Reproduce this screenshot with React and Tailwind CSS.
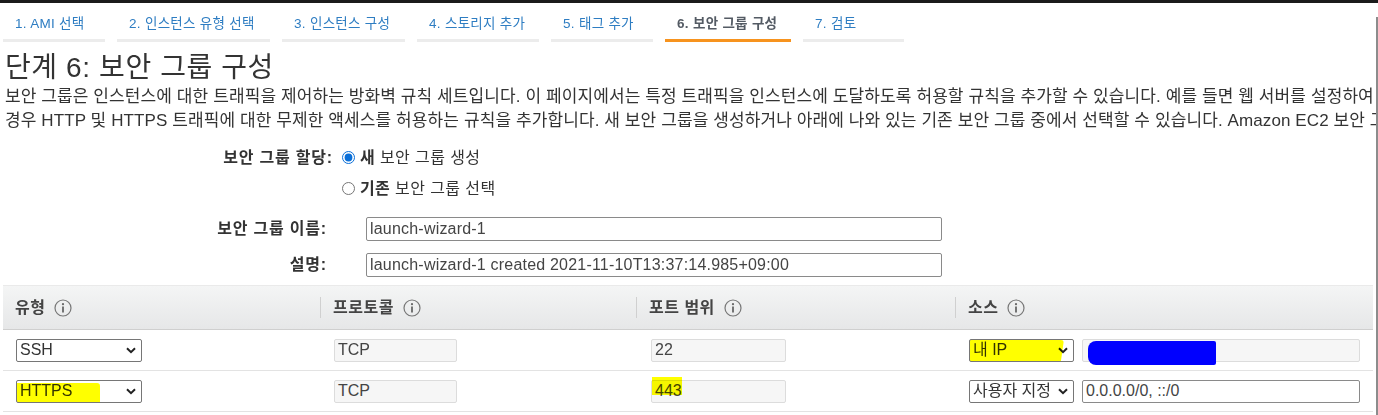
import { useState } from "react";

const tabs = [
  { label: "1. AMI 선택", w: "w-[102px]" },
  { label: "2. 인스턴스 유형 선택", w: "w-[153px]" },
  { label: "3. 인스턴스 구성", w: "w-[123px]" },
  { label: "4. 스토리지 추가", w: "w-[122px]" },
  { label: "5. 태그 추가", w: "w-[102px]" },
  { label: "6. 보안 그룹 구성", w: "w-[126px]", active: true },
  { label: "7. 검토", w: "w-[101px]" },
];

const InfoIcon = () => (
  <svg width="18" height="18" viewBox="0 0 18 18" className="ml-[9px]">
    <circle cx="9" cy="9" r="8" fill="none" stroke="#777" strokeWidth="1.2" />
    <circle cx="9" cy="5.2" r="1.1" fill="#666" />
    <rect x="8.1" y="7.5" width="1.8" height="6" fill="#666" />
  </svg>
);

const Chevron = () => (
  <svg width="10" height="7" viewBox="0 0 10 7" className="shrink-0">
    <path d="M1 1.2 L5 5.2 L9 1.2" fill="none" stroke="#222" strokeWidth="2" />
  </svg>
);

// fake select box, native one renders differently
const SelectBox = ({ value, w, children }) => (
  <div className={`relative flex items-center h-[23px] ${w} border border-[#767676] rounded-[2px] bg-white pl-[3px] pr-[5px] text-[16px] text-[#333] overflow-hidden`}>
    <span className="flex-1 whitespace-nowrap overflow-hidden">{value}</span>
    <Chevron />
    {children}
  </div>
);

const TextBox = ({ value, w, disabled, children }) => (
  <div className={`relative flex items-center h-[23px] ${w} border rounded-[2px] px-[3px] text-[16px] text-[#444] whitespace-nowrap ${disabled ? "bg-[#f6f6f6] border-[#dcdcdc]" : "bg-white border-[#8a8a8a]"}`}>
    {value}
    {children}
  </div>
);

export default function App() {
  const [assign, setAssign] = useState("new");

  return (
    <div className="w-[1378px] h-[415px] overflow-hidden bg-white flex flex-col font-['Liberation_Sans','Noto_Sans_CJK_KR',sans-serif]">
      <div className="h-[3px] bg-[#1b1b1b] shrink-0" />
      <div className="flex flex-1 min-h-0">
        <div className="w-[1376px] flex flex-col">
          {/* wizard tabs */}
          <div className="flex gap-[12px] pl-[3px] pt-[9px]">
            {tabs.map((t) => (
              <div key={t.label} className={`${t.w} h-[30px] flex flex-col`}>
                <div className={`flex-1 pl-[12px] pt-[2px] text-[13.5px] tracking-[0.3px] whitespace-nowrap ${t.active ? "text-[#545b64] font-bold" : "text-[#2e7dc2]"}`}>
                  {t.label}
                </div>
                <div className={`h-[3px] ${t.active ? "bg-[#f7931e]" : "bg-[#ececec]"}`} />
              </div>
            ))}
          </div>

          {/* title + description */}
          <h1 className="pl-[5px] mt-[9px] text-[28px] tracking-[0.6px] leading-[34px] text-[#333]">단계 6: 보안 그룹 구성</h1>
          <div className="pl-[5px] text-[17px] tracking-[0.1px] leading-[24px] text-[#333] whitespace-nowrap overflow-hidden">
            <div>보안 그룹은 인스턴스에 대한 트래픽을 제어하는 방화벽 규칙 세트입니다. 이 페이지에서는 특정 트래픽을 인스턴스에 도달하도록 허용할 규칙을 추가할 수 있습니다. 예를 들면 웹 서버를 설정하여</div>
            <div>경우 HTTP 및 HTTPS 트래픽에 대한 무제한 액세스를 허용하는 규칙을 추가합니다. 새 보안 그룹을 생성하거나 아래에 나와 있는 기존 보안 그룹 중에서 선택할 수 있습니다. Amazon EC2 보안 그룹</div>
          </div>

          {/* form */}
          <div className="flex flex-col mt-[9px] text-[16px] text-[#333]">
            <div className="flex items-center h-[31px]">
              <div className="w-[333px] text-right font-bold tracking-[0.8px]">보안 그룹 할당:</div>
              <label className="flex items-center ml-[9px] gap-[5px]">
                <input type="radio" name="sg" checked={assign === "new"} onChange={() => setAssign("new")} className="w-[13px] h-[13px] m-0 accent-[#0b6fd8]" />
                <span className="tracking-[0.4px]"><b>새</b> 보안 그룹 생성</span>
              </label>
            </div>
            <div className="flex items-center h-[31px]">
              <div className="w-[333px]" />
              <label className="flex items-center ml-[9px] gap-[5px]">
                <input type="radio" name="sg" checked={assign === "old"} onChange={() => setAssign("old")} className="w-[13px] h-[13px] m-0 accent-[#0b6fd8]" />
                <span className="tracking-[0.4px]"><b>기존</b> 보안 그룹 선택</span>
              </label>
            </div>
            <div className="flex items-center h-[36px] mt-[7px]">
              <div className="w-[327px] text-right font-bold tracking-[0.8px]">보안 그룹 이름:</div>
              <input readOnly value="launch-wizard-1" className="ml-[39px] w-[576px] h-[24px] border border-[#8a8a8a] rounded-[2px] px-[3px] text-[16px] tracking-[0.2px] text-[#444] outline-none" />
            </div>
            <div className="flex items-center h-[36px]">
              <div className="w-[327px] text-right font-bold tracking-[0.8px]">설명:</div>
              <input readOnly value="launch-wizard-1 created 2021-11-10T13:37:14.985+09:00" className="ml-[39px] w-[576px] h-[24px] border border-[#8a8a8a] rounded-[2px] px-[3px] text-[16px] tracking-[0.2px] text-[#444] outline-none" />
            </div>
          </div>

          {/* rules table */}
          <div className="ml-[3px] mr-[3px] mt-[2px] flex flex-col text-[16px]">
            <div className="grid grid-cols-[317px_316px_319px_1fr] h-[45px] bg-gradient-to-b from-[#f4f5f5] to-[#e6e7e8] border-t border-[#eaeaea] border-b border-b-[#cfcfcf]">
              {["유형", "프로토콜", "포트 범위", "소스"].map((h, i) => (
                <div key={h} className="flex items-center">
                  {i > 0 && <div className="w-px h-[21px] bg-[#d0d0d0]" />}
                  <span className="pl-[12px] font-bold tracking-[0.5px] text-[#444]">{h}</span>
                  <InfoIcon />
                </div>
              ))}
            </div>

            <div className="grid grid-cols-[317px_316px_319px_1fr] h-[41px] items-center border-b border-[#e3e3e3]">
              <div className="pl-[13px]"><SelectBox value="SSH" w="w-[126px]" /></div>
              <div className="pl-[14px]"><TextBox value="TCP" w="w-[123px]" disabled /></div>
              <div className="pl-[15px]"><TextBox value="22" w="w-[135px]" disabled /></div>
              <div className="pl-[14px] flex items-center gap-[8px]">
                <SelectBox value="내 IP" w="w-[105px]">
                  <span className="absolute left-[-8px] top-0 w-[100px] h-[27px] bg-[#ffff00] mix-blend-multiply rounded-[3px] skew-x-[-8deg]" />
                </SelectBox>
                <TextBox value="" w="w-[278px]" disabled>
                  <span className="absolute left-[5px] top-[1px] w-[128px] h-[24px] bg-[#0000ff] rounded-l-[8px] rounded-r-[2px]" />
                </TextBox>
              </div>
            </div>

            <div className="grid grid-cols-[317px_316px_319px_1fr] h-[41px] items-center border-b border-[#e3e3e3]">
              <div className="pl-[13px]">
                <SelectBox value="HTTPS" w="w-[126px]">
                  <span className="absolute left-[-5px] top-[2px] w-[88px] h-[22px] bg-[#ffff00] mix-blend-multiply rounded-[3px]" />
                </SelectBox>
              </div>
              <div className="pl-[14px]"><TextBox value="TCP" w="w-[123px]" disabled /></div>
              <div className="pl-[15px]">
                <TextBox value="443" w="w-[135px]" disabled>
                  <span className="absolute left-0 top-[-4px] w-[30px] h-[18px] bg-[#ffff00] mix-blend-multiply" />
                </TextBox>
              </div>
              <div className="pl-[14px] flex items-center gap-[8px]">
                <SelectBox value="사용자 지정" w="w-[105px]" />
                <TextBox value="0.0.0.0/0, ::/0" w="w-[278px]" />
              </div>
            </div>
          </div>
        </div>
        <div className="w-[2px] mt-[14px] bg-[#8c8c8c]" />
      </div>
    </div>
  );
}
